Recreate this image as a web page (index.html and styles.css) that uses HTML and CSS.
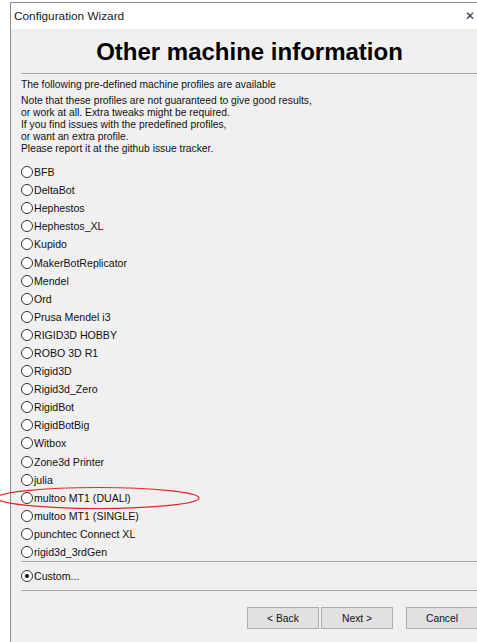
FILE: index.html
```html
<!DOCTYPE html>
<html lang="en">
<head>
<meta charset="utf-8">
<title>Configuration Wizard</title>
<link rel="stylesheet" href="styles.css">
</head>
<body>
<div class="window">
  <div class="titlebar">
    <span class="title">Configuration Wizard</span>
    <span class="close">✕</span>
  </div>
  <div class="content">
    <h1 class="heading">Other machine information</h1>
    <div class="rule"></div>
    <p class="intro">The following pre-defined machine profiles are available</p>
    <p class="note">Note that these profiles are not guaranteed to give good results,<br>or work at all. Extra tweaks might be required.<br>If you find issues with the predefined profiles,<br>or want an extra profile.<br>Please report it at the github issue tracker.</p>
    <ul class="machines">
      <li class="radio"><span class="dot"></span>BFB</li>
      <li class="radio"><span class="dot"></span>DeltaBot</li>
      <li class="radio"><span class="dot"></span>Hephestos</li>
      <li class="radio"><span class="dot"></span>Hephestos_XL</li>
      <li class="radio"><span class="dot"></span>Kupido</li>
      <li class="radio"><span class="dot"></span>MakerBotReplicator</li>
      <li class="radio"><span class="dot"></span>Mendel</li>
      <li class="radio"><span class="dot"></span>Ord</li>
      <li class="radio"><span class="dot"></span>Prusa Mendel i3</li>
      <li class="radio"><span class="dot"></span>RIGID3D HOBBY</li>
      <li class="radio"><span class="dot"></span>ROBO 3D R1</li>
      <li class="radio"><span class="dot"></span>Rigid3D</li>
      <li class="radio"><span class="dot"></span>Rigid3d_Zero</li>
      <li class="radio"><span class="dot"></span>RigidBot</li>
      <li class="radio"><span class="dot"></span>RigidBotBig</li>
      <li class="radio"><span class="dot"></span>Witbox</li>
      <li class="radio"><span class="dot"></span>Zone3d Printer</li>
      <li class="radio"><span class="dot"></span>julia</li>
      <li class="radio marked"><span class="dot"></span>multoo MT1 (DUALl)
        <svg class="circled" viewBox="0 0 210 24" width="210" height="24"><ellipse cx="104" cy="12" rx="101" ry="10.5" fill="none" stroke="#e32626" stroke-width="1.2"/></svg>
      </li>
      <li class="radio"><span class="dot"></span>multoo MT1 (SINGLE)</li>
      <li class="radio"><span class="dot"></span>punchtec Connect XL</li>
      <li class="radio"><span class="dot"></span>rigid3d_3rdGen</li>
    </ul>
    <div class="rule"></div>
    <div class="radio custom"><span class="dot checked"></span>Custom...</div>
    <div class="rule"></div>
    <div class="buttons">
      <button class="btn">&lt; Back</button>
      <button class="btn">Next &gt;</button>
      <button class="btn cancel">Cancel</button>
    </div>
  </div>
</div>
</body>
</html>
```

FILE: styles.css
```css
html, body {
  margin: 0;
  padding: 0;
  background: #ffffff;
  overflow: hidden;
  height: 100%;
}

body {
  font-family: "Liberation Sans", Arial, sans-serif;
  color: #111;
}

.window {
  margin: 2px 0 0 10px;
  width: 480px;
  height: 660px;
  border-left: 1px solid #8e8e8e;
  border-top: 1px solid #8e8e8e;
  display: flex;
  flex-direction: column;
}

.titlebar {
  height: 26px;
  background: #fff;
  display: flex;
  align-items: center;
  justify-content: space-between;
  padding: 0 0 0 3px;
  font-size: 11.8px;
}

.title {
  color: #1a1a1a;
}

.close {
  font-size: 12px;
  color: #333;
  margin-right: 16px;
}

.content {
  flex: 1;
  background: #f0f0f0;
  padding: 0 0 0 10px;
  display: flex;
  flex-direction: column;
}

.heading {
  margin: 0 13px 0 0;
  height: 44px;
  padding-top: 2px;
  box-sizing: border-box;
  line-height: 42px;
  font-size: 24px;
  font-weight: bold;
  text-align: center;
  color: #000;
}

.rule {
  height: 1px;
  background: #a8a8a8;
}

.intro {
  margin: 5px 0 0;
  font-size: 10.3px;
  line-height: 12px;
}

.note {
  margin: 4px 0 0;
  font-size: 10.3px;
  line-height: 12px;
}

.machines {
  list-style: none;
  margin: 8px 0 0;
  padding: 0;
}

.radio {
  height: 18.1px;
  display: flex;
  align-items: center;
  font-size: 10.6px;
  position: relative;
}

.dot {
  width: 12px;
  height: 12px;
  border: 1px solid #333;
  border-radius: 50%;
  background: #fff;
  margin-right: 1px;
  box-sizing: border-box;
  flex: none;
  position: relative;
}

.dot.checked::after {
  content: "";
  position: absolute;
  left: 3px;
  top: 3px;
  width: 4px;
  height: 4px;
  border-radius: 50%;
  background: #111;
}

.circled {
  position: absolute;
  left: -27px;
  top: -3px;
  pointer-events: none;
}

.custom {
  margin: 5px 0 5px;
}

.buttons {
  margin-top: 16px;
  display: flex;
  padding-left: 226px;
}

.btn {
  width: 72px;
  height: 22px;
  font-family: "Liberation Sans", Arial, sans-serif;
  font-size: 10.3px;
  color: #111;
  background: #e1e1e1;
  border: 1px solid #adadad;
  padding: 0;
  margin-right: 2px;
}

.btn.cancel {
  margin-left: 11px;
}
```
